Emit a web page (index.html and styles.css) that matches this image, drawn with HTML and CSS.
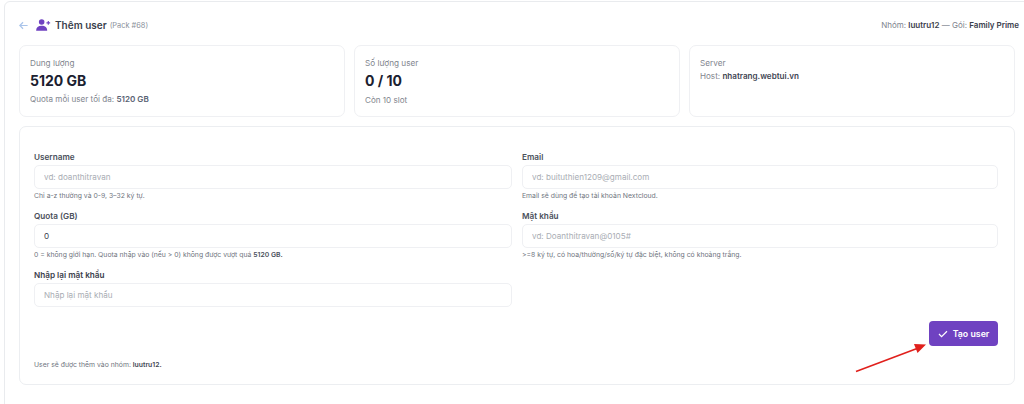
FILE: index.html
```html
<!DOCTYPE html>
<html lang="vi">
<head>
<meta charset="utf-8">
<title>Thêm user</title>
<link rel="stylesheet" href="styles.css">
</head>
<body>
<div class="shell">
  <header class="top">
    <div class="title-wrap">
      <svg class="back" viewBox="0 0 12 12" width="11" height="11"><path d="M10.5 6H2M5.5 2.5 2 6l3.5 3.5" fill="none" stroke="#a9c4ea" stroke-width="1.3"/></svg>
      <svg class="uicon" viewBox="0 0 16 13" width="15" height="12"><circle cx="6" cy="3.2" r="3" fill="#6f42c1"/><path d="M0 12.6c0-3.6 2.2-5.4 6-5.4s6 1.8 6 5.4z" fill="#6f42c1"/><path d="M13.2 2.2v4M11.2 4.2h4" stroke="#6f42c1" stroke-width="1.2"/></svg>
      <h1 class="title">Thêm user</h1>
      <span class="pack">(Pack #68)</span>
    </div>
    <div class="group">Nhóm: <b>luutru12</b> — Gói: <b>Family Prime</b></div>
  </header>
  <section class="stats">
    <div class="stat">
      <div class="stat-label">Dung lượng</div>
      <div class="stat-value">5120 GB</div>
      <div class="stat-sub">Quota mỗi user tối đa: <b>5120 GB</b></div>
    </div>
    <div class="stat">
      <div class="stat-label">Số lượng user</div>
      <div class="stat-value">0 / 10</div>
      <div class="stat-sub stat-sub-gap">Còn 10 slot</div>
    </div>
    <div class="stat">
      <div class="stat-label">Server</div>
      <div class="host">Host: <b>nhatrang.webtui.vn</b></div>
    </div>
  </section>
  <form class="form-card">
    <div class="fields">
      <div class="field">
        <label class="label">Username</label>
        <input class="input" placeholder="vd: doanthitravan">
        <div class="help">Chỉ a-z thường và 0-9, 3–32 ký tự.</div>
      </div>
      <div class="field">
        <label class="label">Email</label>
        <input class="input" placeholder="vd: buituthien1209@gmail.com">
        <div class="help">Email sẽ dùng để tạo tài khoản Nextcloud.</div>
      </div>
      <div class="field">
        <label class="label">Quota (GB)</label>
        <input class="input" value="0">
        <div class="help">0 = không giới hạn. Quota nhập vào (nếu &gt; 0) không được vượt quá <b>5120 GB.</b></div>
      </div>
      <div class="field">
        <label class="label">Mật khẩu</label>
        <input class="input" placeholder="vd: Doanthitravan@0105#">
        <div class="help">&gt;=8 ký tự, có hoa/thường/số/ký tự đặc biệt, không có khoảng trắng.</div>
      </div>
      <div class="field">
        <label class="label label-strong">Nhập lại mật khẩu</label>
        <input class="input" placeholder="Nhập lại mật khẩu">
      </div>
    </div>
    <div class="actions">
      <button class="submit" type="button">
        <svg viewBox="0 0 12 10" width="10" height="8"><path d="M1 5l3.2 3.2L11 1.5" fill="none" stroke="#fff" stroke-width="1.5"/></svg>
        Tạo user
      </button>
    </div>
    <div class="note">User sẽ được thêm vào nhóm: <b>luutru12.</b></div>
    <svg class="arrow" viewBox="0 0 72 30" width="72" height="30"><path d="M1 28.5 62 5.5" stroke="#e0201c" stroke-width="1.6" fill="none"/><path d="M71 1.5 59 1l3.5 9z" fill="#e0201c"/></svg>
  </form>
</div>
</body>
</html>
```
FILE: styles.css
```css
* { box-sizing: border-box; }
html, body { margin: 0; background: #fff; overflow: hidden; }
body { height: 404px; font-family: Inter, "Noto Sans", sans-serif; color: #212529; }
b { font-weight: 600; color: #3f4654; }
.shell {
  width: 1040px;
  margin: 1px 0 0 4px;
  height: 420px;
  padding: 15px 0 0 14px;
  border: 1px solid #e9ebee;
  border-radius: 6px 0 0 0;
}
.top { width: 1000px; height: 16px; display: flex; justify-content: space-between; align-items: center; margin-bottom: 12px; }
.title-wrap { display: flex; align-items: center; }
.back { margin-right: 7px; margin-left: -1px; }
.uicon { margin-right: 4px; }
.title { margin: 0; font-size: 10px; font-weight: 600; color: #3a404c; }
.pack { margin-left: 3px; font-size: 7.4px; color: #8a909a; }
.group { font-size: 8px; color: #7d838d; }
.group b { color: #3a404c; }
.stats { width: 996px; display: grid; grid-template-columns: repeat(3, 326px); column-gap: 9px; margin-bottom: 9px; }
.stat { height: 72px; padding: 11px 10px 0; border: 1px solid #eff0f3; border-radius: 7px; }
.stat-label { font-size: 8.2px; line-height: 12px; color: #7f858e; }
.stat-value { font-size: 14px; line-height: 18px; margin-top: 3px; font-weight: 700; color: #1b2130; }
.stat-sub { font-size: 8.1px; line-height: 12px; margin-top: 3px; color: #7f858e; }
.stat-sub-gap { margin-top: 4px; }
.stat-sub b { color: #596273; }
.host { font-size: 8.1px; line-height: 12px; margin-top: 1px; color: #7f858e; }
.form-card {
  position: relative;
  width: 996px;
  height: 259px;
  padding: 24px 14px 0;
  border: 1px solid #eceef1;
  border-radius: 7px;
}
.fields { display: grid; grid-template-columns: 478px 476px; column-gap: 10px; }
.field { height: 59px; }
.label { display: block; font-size: 8.2px; line-height: 12px; font-weight: 600; color: #4a505b; margin-bottom: 2px; }
.label-strong { color: #3a404c; }
.input {
  display: block;
  width: 100%;
  height: 24px;
  padding: 0 9px;
  border: 1px solid #eff0f3;
  border-radius: 5px;
  background: #fff;
  font: 8.1px Inter, "Noto Sans", sans-serif;
  color: #3a404c;
  outline: none;
}
.input::placeholder { color: #a9adb4; opacity: 1; }
.help { margin-top: 2px; font-size: 6.85px; line-height: 10px; color: #6f7580; }
.help b { color: #4a505b; }
.actions { display: flex; justify-content: flex-end; margin-top: -7px; padding-right: 2px; }
.submit {
  display: flex;
  align-items: center;
  justify-content: center;
  gap: 5px;
  width: 69px;
  height: 25px;
  border: 0;
  border-radius: 4px;
  background: #6f42c1;
  color: #fff;
  font: 600 8.8px Inter, "Noto Sans", sans-serif;
}
.note { margin-top: 14px; font-size: 6.85px; line-height: 10px; color: #6f7580; }
.arrow { position: absolute; left: 835px; top: 216px; }
```
